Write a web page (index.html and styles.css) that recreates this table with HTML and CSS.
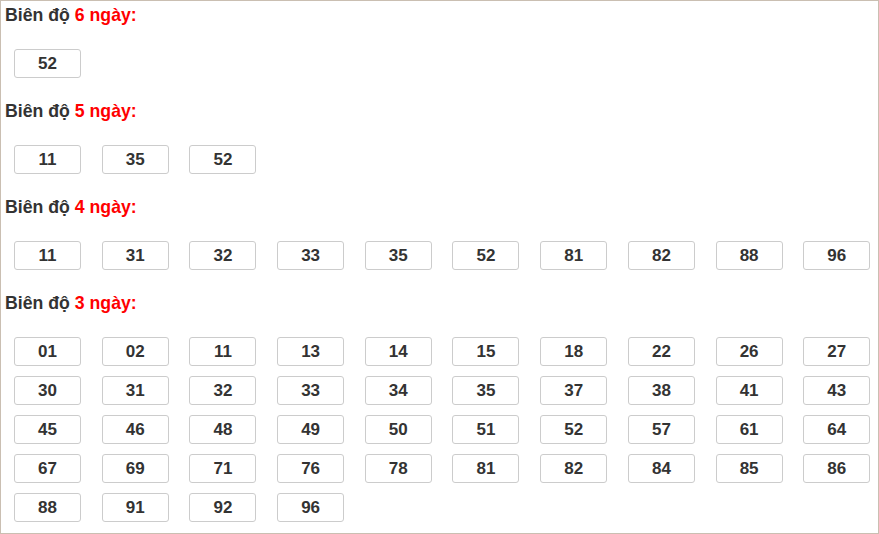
FILE: index.html
```html
<!DOCTYPE html>
<html lang="vi">
<head>
<meta charset="utf-8">
<title>Biên độ</title>
<link rel="stylesheet" href="styles.css">
</head>
<body>
<div class="panel">
  <h3 class="title">Biên độ <span class="hl">6 ngày:</span></h3>
  <div class="grid">
    <span class="num">52</span>
  </div>
  <h3 class="title">Biên độ <span class="hl">5 ngày:</span></h3>
  <div class="grid">
    <span class="num">11</span><span class="num">35</span><span class="num">52</span>
  </div>
  <h3 class="title">Biên độ <span class="hl">4 ngày:</span></h3>
  <div class="grid">
    <span class="num">11</span><span class="num">31</span><span class="num">32</span><span class="num">33</span><span class="num">35</span><span class="num">52</span><span class="num">81</span><span class="num">82</span><span class="num">88</span><span class="num">96</span>
  </div>
  <h3 class="title">Biên độ <span class="hl">3 ngày:</span></h3>
  <div class="grid">
    <span class="num">01</span><span class="num">02</span><span class="num">11</span><span class="num">13</span><span class="num">14</span><span class="num">15</span><span class="num">18</span><span class="num">22</span><span class="num">26</span><span class="num">27</span>
    <span class="num">30</span><span class="num">31</span><span class="num">32</span><span class="num">33</span><span class="num">34</span><span class="num">35</span><span class="num">37</span><span class="num">38</span><span class="num">41</span><span class="num">43</span>
    <span class="num">45</span><span class="num">46</span><span class="num">48</span><span class="num">49</span><span class="num">50</span><span class="num">51</span><span class="num">52</span><span class="num">57</span><span class="num">61</span><span class="num">64</span>
    <span class="num">67</span><span class="num">69</span><span class="num">71</span><span class="num">76</span><span class="num">78</span><span class="num">81</span><span class="num">82</span><span class="num">84</span><span class="num">85</span><span class="num">86</span>
    <span class="num">88</span><span class="num">91</span><span class="num">92</span><span class="num">96</span>
  </div>
</div>
</body>
</html>
```
FILE: styles.css
```css
html, body {
  margin: 0;
  padding: 0;
  background: #fff;
}
.panel {
  box-sizing: border-box;
  width: 879px;
  height: 534px;
  border: 1px solid #cabfb2;
  padding: 4px 0 0 0;
  font-family: "Liberation Sans", Arial, sans-serif;
  color: #333;
}
.title {
  margin: 0 0 24px 0;
  padding-left: 4px;
  font-size: 17.7px;
  line-height: 20px;
  font-weight: bold;
  color: #333;
}
.hl {
  color: #f00;
}
.grid {
  display: grid;
  grid-template-columns: repeat(10, 1fr);
  row-gap: 10px;
  margin-bottom: 23px;
}
.num {
  box-sizing: border-box;
  width: 67px;
  height: 29px;
  margin-left: 13px;
  border: 1px solid #ccc;
  border-radius: 3px;
  font-size: 17px;
  font-weight: bold;
  line-height: 27px;
  text-align: center;
  color: #333;
}
```
